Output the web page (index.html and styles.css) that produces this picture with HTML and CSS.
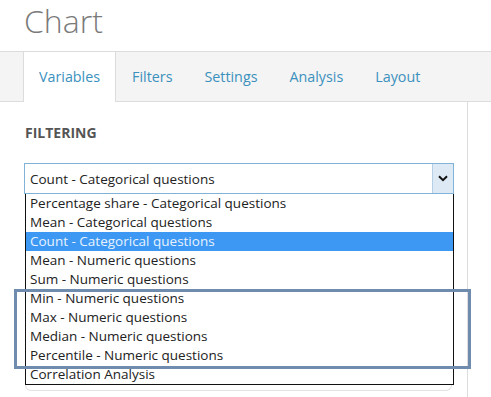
FILE: index.html
```html
<!DOCTYPE html>
<html lang="en">
<head>
    <meta charset="UTF-8">
    <meta name="viewport" content="width=device-width, initial-scale=1.0">
    <title>Chart</title>
    <link rel="stylesheet" href="styles.css">
</head>
<body>

    <h1 class="page-title">Chart</h1>

    <!-- Tabs -->
    <ul class="tabs">
        <li class="tab active">Variables</li>
        <li class="tab">Filters</li>
        <li class="tab">Settings</li>
        <li class="tab">Analysis</li>
        <li class="tab">Layout</li>
    </ul>

    <div class="panel">
        <h4 class="section-title">FILTERING</h4>

        <div class="dropdown">
            <div class="select-box">
                <span class="select-value">Count - Categorical questions</span>
                <span class="select-arrow">
                    <svg width="10" height="7" viewBox="0 0 10 7"><path d="M1 1.2 L5 5.2 L9 1.2" fill="none" stroke="#111" stroke-width="2"/></svg>
                </span>
            </div>
            <ul class="options">
                <li>Percentage share - Categorical questions</li>
                <li>Mean - Categorical questions</li>
                <li class="selected">Count - Categorical questions</li>
                <li>Mean - Numeric questions</li>
                <li>Sum - Numeric questions</li>
                <li>Min - Numeric questions</li>
                <li>Max - Numeric questions</li>
                <li>Median - Numeric questions</li>
                <li>Percentile - Numeric questions</li>
                <li>Correlation Analysis</li>
            </ul>
            <div class="dropdown-base"></div>
        </div>

        <!-- Highlight frame over the numeric options -->
        <div class="highlight-frame"></div>
    </div>

</body>
</html>
```

FILE: styles.css
```css
/* Page */
body {
    font-family: 'Open Sans', 'Liberation Sans', sans-serif;
    margin: 0;
    background: #ffffff;
    color: #222;
    overflow: hidden;
}

/* Title */
.page-title {
    margin: 0;
    padding: 0 0 0 24px;
    height: 51px;
    font-size: 32px;
    font-weight: 300;
    line-height: 42px;
    color: #7a7a7a;
}

/* Tabs */
.tabs {
    list-style: none;
    margin: 0;
    padding: 0 0 0 23px;
    display: flex;
    height: 49px;
    background: #f4f4f4;
    border-top: 1px solid #dcdcdc;
    border-bottom: 1px solid #dcdcdc;
}

.tab {
    padding: 0 15px;
    font-size: 14.3px;
    line-height: 50px;
    color: #3b91bd;
    border-left: 1px solid transparent;
    border-right: 1px solid transparent;
}

.tab.active {
    background: #ffffff;
    border-left-color: #dcdcdc;
    border-right-color: #dcdcdc;
    height: 50px;
}

/* Panel */
.panel {
    position: relative;
    width: 443px;
    height: 300px;
    padding: 0 0 0 24px;
    border-right: 1px solid #dcdcdc;
}

.section-title {
    margin: 0;
    padding: 21px 0 0 1px;
    height: 40px;
    font-size: 14px;
    font-weight: 700;
    line-height: 20px;
    color: #555;
}

/* Dropdown */
.dropdown {
    width: 430px;
}

.select-box {
    display: flex;
    justify-content: space-between;
    height: 29px;
    border: 1px solid #80b3d7;
}

.select-value {
    padding-left: 5px;
    font-size: 13.5px;
    line-height: 30px;
}

.select-arrow {
    display: flex;
    align-items: center;
    justify-content: center;
    width: 20px;
    background: #dde9f5;
    border-left: 1px solid #b5cfe6;
}

.options {
    list-style: none;
    margin: 0 0 0 1px;
    padding: 0;
    border: 1px solid #111;
    border-top: none;
}

.options li {
    height: 19px;
    padding-left: 4px;
    font-size: 13.5px;
    line-height: 19px;
    white-space: nowrap;
}

.options li.selected {
    background: #3c98f2;
    color: #e8f2ff;
}

.dropdown-base {
    height: 5px;
    margin: 0 2px 0 1px;
    border: 1px solid #e2e2e2;
    border-top: none;
    border-radius: 0 0 10px 10px;
}

.highlight-frame {
    position: absolute;
    left: 14px;
    top: 187px;
    width: 451px;
    height: 74px;
    border: 3px solid #6f8bad;
}
```
